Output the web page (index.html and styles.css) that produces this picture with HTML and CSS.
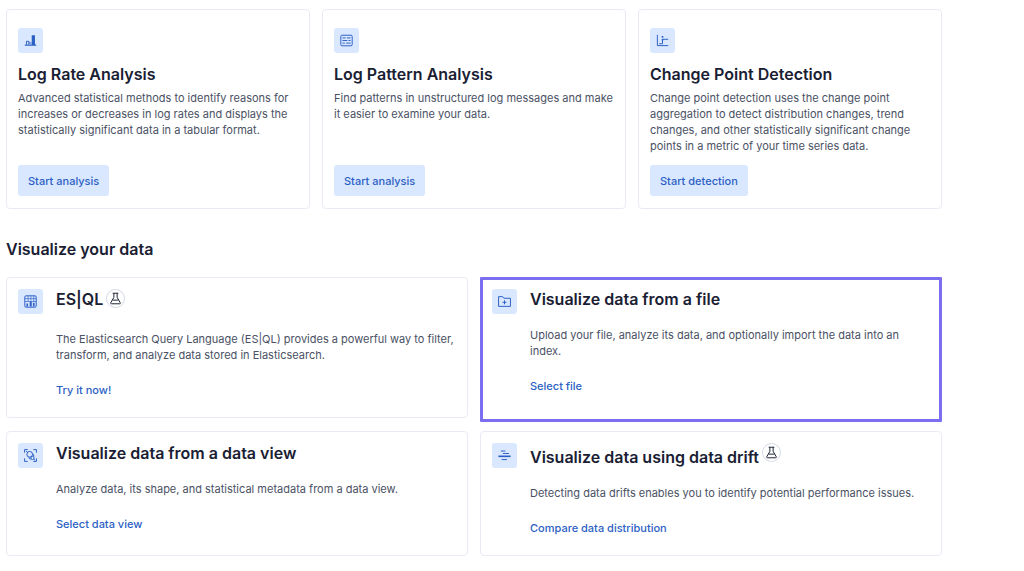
FILE: index.html
```html
<!DOCTYPE html>
<html lang="en">
<head>
<meta charset="utf-8">
<meta name="viewport" content="width=device-width, initial-scale=1">
<title>Machine Learning</title>
<link rel="stylesheet" href="styles.css">
</head>
<body>
<main class="page">
  <section class="tools" aria-label="Analysis tools">
    <article class="card tool">
      <span class="icon-box"><svg viewBox="0 0 16 16" aria-hidden="true"><path d="M3 13V9h3v4M6 11h3" class="line"/><path d="M9.500 1.500h4V13h-4zM1 13h14v1.500H1z" class="solid"/></svg></span>
      <h3 class="title">Log Rate Analysis</h3>
      <p class="text">Advanced statistical methods to identify reasons for increases or decreases in log rates and displays the statistically significant data in a tabular format.</p>
      <button type="button" class="button">Start analysis</button>
    </article>
    <article class="card tool">
      <span class="icon-box"><svg viewBox="0 0 16 16" aria-hidden="true"><rect x="1" y="1.500" width="14" height="13" rx="1.500" class="line"/><path d="M3 4.800h4M8.500 4.800H13M3 8h6M10.500 8H13M3 11.200h3M7.500 11.200H13" class="line"/></svg></span>
      <h3 class="title">Log Pattern Analysis</h3>
      <p class="text">Find patterns in unstructured log messages and make it easier to examine your data.</p>
      <button type="button" class="button">Start analysis</button>
    </article>
    <article class="card tool">
      <span class="icon-box"><svg viewBox="0 0 16 16" aria-hidden="true"><path d="M1.700 1v13.300H15M4 12h4V6.500h7" class="line"/><path d="M7 2.500h2v2H7zM7 6h2v2H7z" class="solid"/></svg></span>
      <h3 class="title">Change Point Detection</h3>
      <p class="text">Change point detection uses the change point aggregation to detect distribution changes, trend changes, and other statistically significant change points in a metric of your time series data.</p>
      <button type="button" class="button">Start detection</button>
    </article>
  </section>

  <h2 class="heading">Visualize your data</h2>

  <section class="sources" aria-label="Visualize your data">
    <article class="card source">
      <span class="icon-box"><svg viewBox="0 0 16 16" aria-hidden="true"><rect x="1" y="1" width="14" height="14" rx="1.500" class="line"/><path d="M1 4.500h14M1 8h14M5 1v7M8.500 1v6M12 1v7" class="line faint"/><path d="M3 10.500h2V14H3zM7 8h2.500v6H7zM11 9.500h2V14h-2z" class="solid"/></svg></span>
      <div class="body">
        <div class="title-row baseline">
          <h3 class="title">ES|QL</h3>
          <span class="badge" role="img" aria-label="Technical preview"><svg viewBox="0 0 16 16" aria-hidden="true"><path d="M4.500 1.500h7M6 1.500v5L2.200 13.200q-.5 1.300.8 1.300h10q1.300 0 .8-1.300L10 6.500v-5M4.500 10h7" class="line"/></svg></span>
        </div>
        <p class="text">The Elasticsearch Query Language (ES|QL) provides a powerful way to filter, transform, and analyze data stored in Elasticsearch.</p>
        <a class="link" href="#">Try it now!</a>
      </div>
    </article>
    <article class="card source selected">
      <span class="icon-box"><svg viewBox="0 0 16 16" aria-hidden="true"><path d="M.7 14V2h5l1.500 2h8.100v10zM5.500 9h5M8 6.500v5" class="line"/></svg></span>
      <div class="body">
        <div class="title-row">
          <h3 class="title">Visualize data from a file</h3>
        </div>
        <p class="text">Upload your file, analyze its data, and optionally import the data into an index.</p>
        <a class="link" href="#">Select file</a>
      </div>
    </article>
    <article class="card source">
      <span class="icon-box"><svg viewBox="0 0 16 16" aria-hidden="true"><path d="M.7 4.500V.7h3.800M11.500.7h3.800v3.800M.7 11.500v3.800h3.800M11.500 15.300h3.800v-3.800" class="line"/><circle cx="7" cy="6.500" r="3.500" class="line"/><path d="M4.500 4 2.500 2.500M10.300 5.500q2.200 1.500 1.700 3.700M6 10q0 2.500 2.600 2.500M12 12.500l1.800 1.500" class="line"/><circle cx="10.500" cy="11" r="2" class="line"/></svg></span>
      <div class="body">
        <div class="title-row">
          <h3 class="title">Visualize data from a data view</h3>
        </div>
        <p class="text">Analyze data, its shape, and statistical metadata from a data view.</p>
        <a class="link" href="#">Select data view</a>
      </div>
    </article>
    <article class="card source">
      <span class="icon-box"><svg viewBox="0 0 16 16" aria-hidden="true"><path d="M3.500 2.500H9M6 5.500h7.500M4.500 13H11" class="line"/><path d="M.5 9h15" class="line thick"/></svg></span>
      <div class="body">
        <div class="title-row raised">
          <h3 class="title">Visualize data using data drift</h3>
          <span class="badge" role="img" aria-label="Technical preview"><svg viewBox="0 0 16 16" aria-hidden="true"><path d="M4.500 1.500h7M6 1.500v5L2.200 13.200q-.5 1.300.8 1.300h10q1.300 0 .8-1.300L10 6.500v-5M4.500 10h7" class="line"/></svg></span>
        </div>
        <p class="text">Detecting data drifts enables you to identify potential performance issues.</p>
        <a class="link" href="#">Compare data distribution</a>
      </div>
    </article>
  </section>
</main>
</body>
</html>
```
FILE: styles.css
```css
* {
  box-sizing: border-box;
}

body {
  margin: 0;
  background: #fff;
  color: #1a2033;
  font-family: Inter, "Liberation Sans", sans-serif;
}

h2, h3, p {
  margin: 0;
}

.page {
  padding: 9px 82px 12px 6px;
}

.tools,
.sources {
  display: grid;
  gap: 12px;
}

.tools {
  grid-template-columns: repeat(3, 1fr);
}

.sources {
  grid-template-columns: repeat(2, 1fr);
  row-gap: 13px;
}

.card {
  display: flex;
  border: 1px solid #e8ebf5;
  border-radius: 4px;
  background: #fff;
}

.tool {
  flex-direction: column;
  align-items: flex-start;
  padding: 18px 11px 12px;
}

.source {
  gap: 13px;
  padding: 11px 11px 19px;
}

.selected {
  margin-bottom: -4px;
  outline: 3px solid #7b6ff0;
  outline-offset: -3px;
  border-radius: 1px;
}

.icon-box {
  display: flex;
  flex: none;
  align-items: center;
  justify-content: center;
  width: 25px;
  height: 25px;
  border-radius: 3px;
  background: #d9e8ff;
  color: #2c5fc4;
}

.icon-box svg {
  width: 13px;
  height: 13px;
}

.line {
  fill: none;
  stroke: currentColor;
  stroke-width: 1.2;
}

.thick {
  stroke-width: 2;
}

.faint {
  stroke-width: 0.8;
}

.solid {
  fill: currentColor;
}

.title,
.heading {
  font-size: 16px;
  font-weight: 600;
  line-height: 20px;
}

.tool .title {
  margin: 11px 0 6px;
}

.text {
  color: #4a5164;
  font-size: 11px;
  line-height: 16px;
}

.button {
  height: 31px;
  margin-top: auto;
  padding: 0 10px;
  border: 0;
  border-radius: 3px;
  background: #d9e8ff;
  color: #2c5fc4;
  font: 500 11px/16px Inter, "Liberation Sans", sans-serif;
}

.tool .text {
  margin-bottom: 11px;
}

.heading {
  margin: 30px 0 18px;
}

.body {
  flex: 1;
}

.title-row {
  display: flex;
  gap: 3px;
}

.title-row.baseline {
  height: 24px;
}

.title-row.raised {
  align-items: flex-end;
  height: 24px;
}

.body .text {
  margin: 18px 0 15px;
}

.badge {
  display: flex;
  flex: none;
  align-self: flex-start;
  align-items: center;
  justify-content: center;
  width: 19px;
  height: 19px;
  border: 1px solid #d3dae6;
  border-radius: 50%;
}

.badge svg {
  width: 13px;
  height: 13px;
}

.link {
  display: inline-block;
  color: #2c5fc4;
  font-size: 11px;
  font-weight: 500;
  line-height: 16px;
  text-decoration: none;
}
```
